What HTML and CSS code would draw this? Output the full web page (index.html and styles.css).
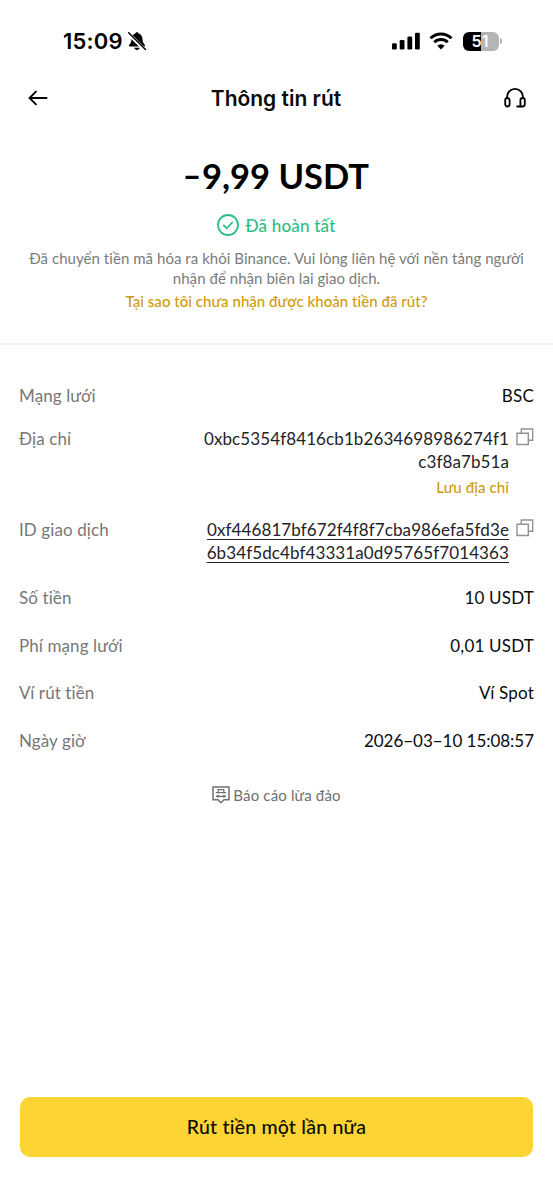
FILE: index.html
```
<!DOCTYPE html>
<html lang="vi">
<head>
  <meta charset="UTF-8" />
  <meta name="viewport" content="width=device-width, initial-scale=1.0"/>
  <title>Thông tin rút</title>
  <link rel="stylesheet" href="styles.css">
</head>
<body>
  <div class="screen">
    <!-- Status bar -->
    <div class="status-bar">
      <div class="clock">
        <span class="time">15:09</span>
        <svg class="bell" width="20" height="20" viewBox="0 0 20 20">
          <path d="M10 1.2c.9 0 1.5.5 1.6 1.2 2.5.7 3.7 2.6 3.8 5.2.1 3.2.9 4.6 2.3 6.1.7.8.3 1.9-.8 1.9H3.1c-1.1 0-1.5-1.1-.8-1.9 1.4-1.5 2.2-2.9 2.3-6.1.1-2.6 1.3-4.5 3.8-5.2.1-.7.7-1.2 1.6-1.2z"/>
          <path d="M7.3 16.8h5.4c-.3 1.3-1.3 2.2-2.7 2.2s-2.4-.9-2.7-2.2z"/>
          <path d="M1.5 2.6 18 19" stroke="#fff" stroke-width="3.6"/>
          <path d="m1.7 1.7 16.8 16.8" stroke="#000" stroke-width="1.5" stroke-linecap="round"/>
        </svg>
      </div>
      <div class="indicators">
        <svg class="signal" width="28" height="18" viewBox="0 0 28 18">
          <rect x="0" y="11.2" width="4.8" height="6.3" rx="1.3"/>
          <rect x="7.7" y="8" width="4.8" height="9.5" rx="1.3"/>
          <rect x="15.4" y="4.5" width="4.8" height="13" rx="1.3"/>
          <rect x="23" y="0.7" width="4.8" height="16.8" rx="1.3"/>
        </svg>
        <svg class="wifi" width="24" height="18" viewBox="0 0 24 18">
          <path d="M1.5 6.3a15 15 0 0 1 21 0M5.3 10.3a9.6 9.6 0 0 1 13.4 0" fill="none" stroke="#000" stroke-width="3"/>
          <path d="m12 17.4-3.7-3.7a5.3 5.3 0 0 1 7.4 0z"/>
        </svg>
        <div class="battery"><span>5</span><span>1</span></div>
        <div class="battery-cap"></div>
      </div>
    </div>

    <!-- Header -->
    <header class="header">
      <svg width="20" height="16" viewBox="0 0 20 16" fill="none" stroke="#000" stroke-width="1.9">
        <path d="M19.3 8H1.8M8.4 1.2 1.6 8l6.8 6.8"/>
      </svg>
      <h1>Thông tin rút</h1>
      <svg width="22" height="20" viewBox="0 0 22 20" fill="none" stroke="#000" stroke-width="1.8">
        <path d="M3 11V8.9a8 8 0 0 1 16 0V11"/>
        <rect x="1.2" y="10" width="4.4" height="8.5" rx="2.2"/>
        <path d="M16.4 18.5v-6.3a2.2 2.2 0 0 1 4.4 0v4.1a2.2 2.2 0 0 1-2.2 2.2h-6.1"/>
      </svg>
    </header>

    <!-- Amount and status -->
    <section class="summary">
      <div class="amount"><span class="minus">−</span>9,99 USDT</div>
      <div class="state">
        <svg width="22" height="22" viewBox="0 0 22 22" fill="none" stroke="#2ebd85" stroke-width="1.8">
          <circle cx="11" cy="11" r="10"/>
          <path d="m6.3 11 3.4 3.3 6-6.3"/>
        </svg>
        <span>Đã hoàn tất</span>
      </div>
      <p class="note">Đã chuyển tiền mã hóa ra khỏi Binance. Vui lòng liên hệ với nền tảng người<br>nhận để nhận biên lai giao dịch.</p>
      <a class="help" href="#">Tại sao tôi chưa nhận được khoản tiền đã rút?</a>
    </section>

    <!-- Details -->
    <section class="details">
      <div class="row network">
        <span class="label">Mạng lưới</span>
        <span class="value">BSC</span>
      </div>
      <div class="row address">
        <span class="label">Địa chỉ</span>
        <div class="copyable">
          <div class="hash">
            0xbc5354f8416cb1b2634698986274f1<br>c3f8a7b51a
            <a class="save" href="#">Lưu địa chỉ</a>
          </div>
          <svg class="copy" width="18" height="18" viewBox="0 0 18 18" fill="none" stroke="#929292" stroke-width="1.4">
            <path d="M1 5.3h11.3v11.2H1zM5.3 5.3V1h11.4v11.3h-4.4"/>
          </svg>
        </div>
      </div>
      <div class="row txid">
        <span class="label">ID giao dịch</span>
        <div class="copyable">
          <div class="hash linked">0xf446817bf672f4f8f7cba986efa5fd3e<br>6b34f5dc4bf43331a0d95765f7014363</div>
          <svg class="copy" width="18" height="18" viewBox="0 0 18 18" fill="none" stroke="#929292" stroke-width="1.4">
            <path d="M1 5.3h11.3v11.2H1zM5.3 5.3V1h11.4v11.3h-4.4"/>
          </svg>
        </div>
      </div>
      <div class="row">
        <span class="label">Số tiền</span>
        <span class="value">10 USDT</span>
      </div>
      <div class="row">
        <span class="label">Phí mạng lưới</span>
        <span class="value">0,01 USDT</span>
      </div>
      <div class="row">
        <span class="label">Ví rút tiền</span>
        <span class="value">Ví Spot</span>
      </div>
      <div class="row">
        <span class="label">Ngày giờ</span>
        <span class="value date">2026−03−10 15:08:57</span>
      </div>
    </section>

    <div class="report">
      <svg width="18" height="18" viewBox="0 0 18 18" fill="none" stroke="#707070" stroke-width="1.5">
        <path d="M1 1h16v12.8h-5l-3 2.9-3-2.9H1z"/>
        <path d="M6.2 6.3V3.7h5.6v2.6M3.8 6.7h10.4M4 10.3h10" stroke-width="1.2"/>
        <path d="m6 8.6 1.7 1.7L6 12l-1.7-1.7zM12 8.6l1.7 1.7L12 12l-1.7-1.7z" fill="#707070" stroke="none"/>
      </svg>
      <span>Báo cáo lừa đảo</span>
    </div>

    <button class="again">Rút tiền một lần nữa</button>
  </div>
</body>
</html>
```
FILE: styles.css
```
* {
  box-sizing: border-box;
}

body {
  margin: 0;
  background: #fff;
  color: #0b0b0b;
  font-family: Lato, "Noto Sans", sans-serif;
  font-variant-ligatures: none;
}

a {
  color: #d09b0c;
  text-decoration: none;
}

.screen {
  display: flex;
  flex-direction: column;
  height: 1200px;
}

.status-bar {
  display: flex;
  justify-content: space-between;
  align-items: center;
  height: 82px;
  padding: 0 51px 0 63px;
}

.clock,
.indicators {
  display: flex;
  align-items: center;
}

.time {
  font-family: Inter, sans-serif;
  font-size: 22px;
  font-weight: 600;
  letter-spacing: 0.2px;
  color: #000;
}

.bell {
  margin-left: 4px;
}

.wifi {
  margin: 0 10px 0 9px;
}

.battery {
  display: flex;
  justify-content: center;
  align-items: center;
  width: 36px;
  height: 19px;
  padding-right: 2px;
  border-radius: 6px;
  background: linear-gradient(90deg, #000 50%, #b4b4b4 50%);
  color: #fff;
  font-family: Inter, sans-serif;
  font-size: 16px;
  font-weight: 600;
}

.battery-cap {
  width: 2px;
  height: 6px;
  margin-left: 1px;
  border-radius: 0 2px 2px 0;
  background: #b4b4b4;
}

.header {
  display: flex;
  justify-content: space-between;
  align-items: center;
  height: 32px;
  padding: 0 27px 0 28px;
}

.header h1 {
  margin: 2px 0 0;
  font-family: Inter, sans-serif;
  font-size: 21px;
  font-weight: 600;
  line-height: 32px;
}

.summary {
  display: flex;
  flex-direction: column;
  align-items: center;
  height: 231px;
  padding-top: 40px;
  border-bottom: 2px solid #f3f3f3;
}

.amount {
  margin-left: -2px;
  font-size: 34.5px;
  font-weight: 700;
  line-height: 44px;
  color: #000;
}

.minus {
  display: inline-block;
  transform: scaleX(0.85);
}

.state {
  display: flex;
  align-items: center;
  gap: 6px;
  height: 24px;
  margin-top: 15px;
  color: #2ebd85;
  font-size: 17px;
  font-weight: 500;
  letter-spacing: 0.2px;
}

.note {
  margin: 12px 0 0;
  color: #7b7b7b;
  font-size: 15px;
  line-height: 19.5px;
  letter-spacing: 0.05px;
  text-align: center;
  white-space: nowrap;
}

.help {
  margin-top: 3px;
  font-size: 15px;
  font-weight: 500;
  line-height: 20px;
  letter-spacing: 0.04px;
}

.details {
  padding: 39px 19px 0;
}

.row {
  display: flex;
  justify-content: space-between;
  align-items: flex-start;
  height: 47.7px;
  font-size: 17px;
  line-height: 24px;
  white-space: nowrap;
}

.label {
  color: #777;
  letter-spacing: 0.1px;
}

.value {
  letter-spacing: 0.2px;
}

.date {
  letter-spacing: -0.03px;
}

.network {
  height: 43px;
}

.address {
  height: 91px;
}

.txid {
  height: 68px;
}

.copyable {
  display: flex;
  gap: 7px;
}

.hash {
  color: #1e2329;
  line-height: 23px;
  letter-spacing: 0.1px;
  text-align: right;
}

.linked {
  text-decoration: underline;
  text-decoration-thickness: 1px;
  text-underline-offset: 3px;
}

.save {
  display: block;
  margin-top: 3px;
  font-size: 15px;
  font-weight: 500;
}

.copy {
  margin-top: 1px;
}

.report {
  display: flex;
  justify-content: center;
  align-items: center;
  gap: 3px;
  height: 24px;
  margin-top: 6px;
  color: #707070;
  font-size: 15px;
  letter-spacing: 0.15px;
}

.again {
  height: 60px;
  margin: auto 20px 43px;
  padding: 0 6px 2px;
  border: none;
  border-radius: 10px;
  background: #fcd535;
  color: #0b0b0b;
  font-family: inherit;
  font-size: 19.5px;
  font-weight: 500;
  letter-spacing: 0.2px;
}
```
